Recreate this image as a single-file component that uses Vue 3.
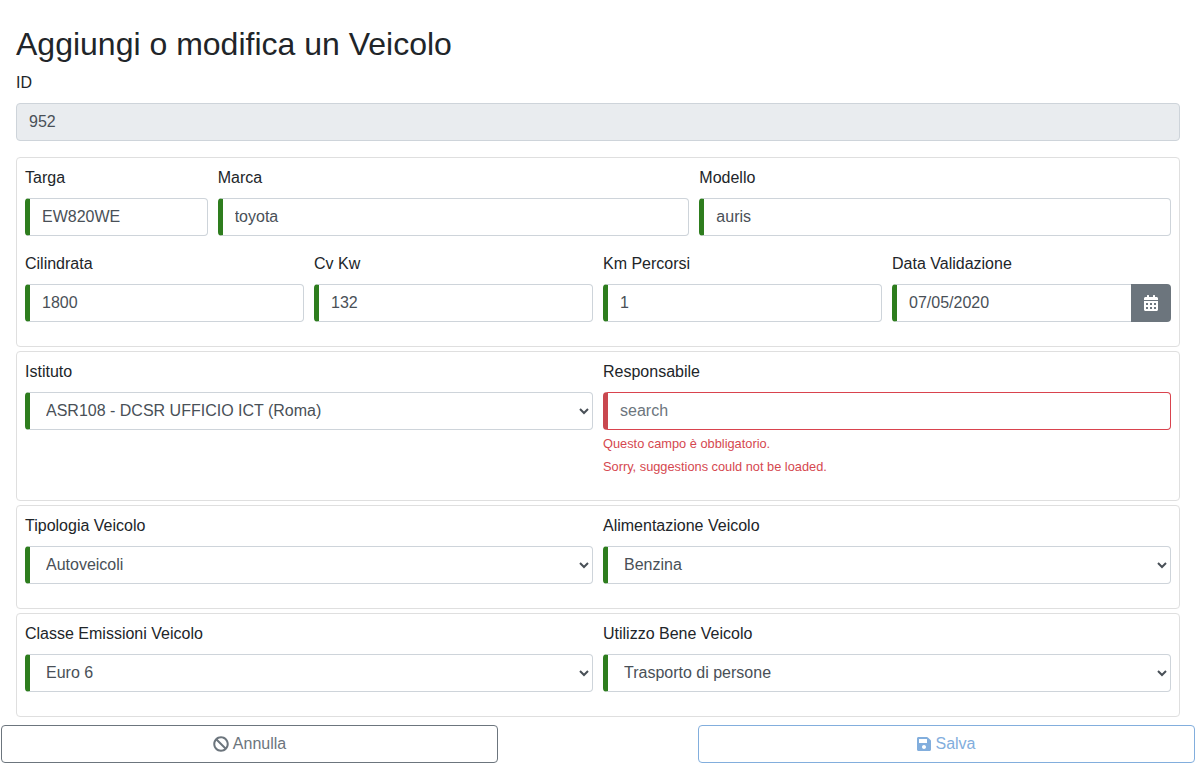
<script setup>
const row1 = [
  { label: 'Targa', value: 'EW820WE', span: 'span2' },
  { label: 'Marca', value: 'toyota', span: 'span5' },
  { label: 'Modello', value: 'auris', span: 'span5' },
]
const row2 = [
  { label: 'Cilindrata', value: '1800' },
  { label: 'Cv Kw', value: '132' },
  { label: 'Km Percorsi', value: '1' },
]
const selectCards = [
  [
    { label: 'Tipologia Veicolo', value: 'Autoveicoli' },
    { label: 'Alimentazione Veicolo', value: 'Benzina' },
  ],
  [
    { label: 'Classe Emissioni Veicolo', value: 'Euro 6' },
    { label: 'Utilizzo Bene Veicolo', value: 'Trasporto di persone' },
  ],
]
</script>

<template>
  <div class="page">
    <h2 class="title">Aggiungi o modifica un Veicolo</h2>
    <div class="group">
      <label class="label">ID</label>
      <input class="control locked" value="952" disabled />
    </div>

    <section class="card">
      <div class="grid">
        <div v-for="f in row1" :key="f.label" class="group" :class="f.span">
          <label class="label">{{ f.label }}</label>
          <input class="control ok" :value="f.value" />
        </div>
        <div v-for="f in row2" :key="f.label" class="group span3">
          <label class="label">{{ f.label }}</label>
          <input class="control ok" :value="f.value" />
        </div>
        <div class="group span3">
          <label class="label">Data Validazione</label>
          <div class="joined">
            <input class="control ok date" value="07/05/2020" />
            <button class="calendar" type="button" aria-label="Calendario">
              <svg class="cal-icon" viewBox="0 0 448 512" aria-hidden="true"><path fill="currentColor" d="M0 464c0 26.5 21.5 48 48 48h352c26.5 0 48-21.5 48-48V192H0v272zm320-196c0-6.6 5.4-12 12-12h40c6.6 0 12 5.4 12 12v40c0 6.6-5.4 12-12 12h-40c-6.6 0-12-5.4-12-12v-40zm0 128c0-6.6 5.4-12 12-12h40c6.6 0 12 5.4 12 12v40c0 6.6-5.4 12-12 12h-40c-6.6 0-12-5.4-12-12v-40zM192 268c0-6.6 5.4-12 12-12h40c6.6 0 12 5.4 12 12v40c0 6.6-5.4 12-12 12h-40c-6.6 0-12-5.4-12-12v-40zm0 128c0-6.6 5.4-12 12-12h40c6.6 0 12 5.4 12 12v40c0 6.6-5.4 12-12 12h-40c-6.6 0-12-5.4-12-12v-40zM64 268c0-6.6 5.4-12 12-12h40c6.6 0 12 5.4 12 12v40c0 6.6-5.4 12-12 12H76c-6.6 0-12-5.4-12-12v-40zm0 128c0-6.6 5.4-12 12-12h40c6.6 0 12 5.4 12 12v40c0 6.6-5.4 12-12 12H76c-6.6 0-12-5.4-12-12v-40zM400 64h-48V16c0-8.8-7.2-16-16-16h-32c-8.8 0-16 7.2-16 16v48H160V16c0-8.8-7.2-16-16-16h-32c-8.8 0-16 7.2-16 16v48H48C21.5 64 0 85.5 0 112v48h448v-48c0-26.5-21.5-48-48-48z"/></svg>
            </button>
          </div>
        </div>
      </div>
    </section>

    <section class="card">
      <div class="grid">
        <div class="group span6">
          <label class="label">Istituto</label>
          <select class="control ok"><option>ASR108 - DCSR UFFICIO ICT (Roma)</option></select>
        </div>
        <div class="group span6 with-errors">
          <label class="label">Responsabile</label>
          <input class="control bad" placeholder="search" />
          <div class="error first">Questo campo è obbligatorio.</div>
          <div class="error">Sorry, suggestions could not be loaded.</div>
        </div>
      </div>
    </section>

    <section v-for="(pair, i) in selectCards" :key="i" class="card">
      <div class="grid">
        <div v-for="f in pair" :key="f.label" class="group span6">
          <label class="label">{{ f.label }}</label>
          <select class="control ok"><option>{{ f.value }}</option></select>
        </div>
      </div>
    </section>

    <div class="actions">
      <button class="btn cancel" type="button">
        <svg class="btn-icon ban" viewBox="0 0 512 512" aria-hidden="true"><path fill="currentColor" d="M256 8C119.034 8 8 119.033 8 256s111.034 248 248 248 248-111.034 248-248S392.967 8 256 8zm130.108 117.892c65.448 65.448 70 165.481 20.677 235.637L150.47 105.216c70.204-49.356 170.226-44.735 235.638 20.676zM125.892 386.108c-65.448-65.448-70-165.481-20.677-235.637L361.53 406.784c-70.203 49.356-170.226 44.736-235.638-20.676z"/></svg>
        Annulla
      </button>
      <button class="btn save" type="button" disabled>
        <svg class="btn-icon floppy" viewBox="0 0 448 512" aria-hidden="true"><path fill="currentColor" d="M433.941 129.941l-83.882-83.882A48 48 0 0 0 316.118 32H48C21.49 32 0 53.49 0 80v352c0 26.51 21.49 48 48 48h352c26.51 0 48-21.49 48-48V163.882a48 48 0 0 0-14.059-33.941zM224 416c-35.346 0-64-28.654-64-64 0-35.346 28.654-64 64-64s64 28.654 64 64c0 35.346-28.654 64-64 64zm96-304.52V212c0 6.627-5.373 12-12 12H76c-6.627 0-12-5.373-12-12V108c0-6.627 5.373-12 12-12h228.52c3.183 0 6.235 1.264 8.485 3.515l3.48 3.48A11.996 11.996 0 0 1 320 111.48z"/></svg>
        Salva
      </button>
    </div>
  </div>
</template>

<style scoped>
.page {
  box-sizing: border-box;
  width: 1200px;
  padding: 25px 20px 0 16px;
  font-family: "Liberation Sans", Arial, sans-serif;
  font-size: 16px;
  line-height: 24px;
  color: #212529;
}
.title {
  margin: 0 0 8px;
  font-size: 32px;
  font-weight: 500;
  line-height: 38.4px;
}
.label {
  display: block;
  margin-bottom: 8px;
}
.group {
  margin-bottom: 16px;
  min-width: 0;
}
.with-errors {
  margin-bottom: 17px;
}
.control {
  display: block;
  box-sizing: border-box;
  width: 100%;
  height: 38px;
  padding: 6px 12px;
  border: 1px solid #ced4da;
  border-radius: 4px;
  background: #fff;
  color: #495057;
  font: inherit;
  outline: none;
}
select.control {
  padding-top: 5px;
  padding-bottom: 6px;
}
.control::placeholder {
  color: #6c757d;
  opacity: 1;
}
.locked {
  background: #e9ecef;
  opacity: 1;
}
.ok {
  border-left: 5px solid #2e7d1e;
}
.bad {
  border-color: #d9434e;
  border-left: 5px solid #c9484f;
}
.card {
  box-sizing: border-box;
  margin-bottom: 4px;
  padding: 8px;
  border: 1px solid #dfdfdf;
  border-radius: 4px;
}
.grid {
  display: grid;
  grid-template-columns: repeat(12, minmax(0, 1fr));
  column-gap: 10px;
}
.span2 { grid-column: span 2; }
.span3 { grid-column: span 3; }
.span5 { grid-column: span 5; }
.span6 { grid-column: span 6; }
.joined {
  display: flex;
}
.date {
  flex: 1;
  min-width: 0;
  border-right: 0;
  border-radius: 4px 0 0 4px;
}
.calendar {
  display: flex;
  align-items: center;
  justify-content: center;
  width: 40px;
  height: 38px;
  padding: 0;
  border: 0;
  border-radius: 0 4px 4px 0;
  background: #6c757d;
  color: #fff;
}
.cal-icon {
  width: 14px;
  height: 16px;
}
.error {
  margin-top: 7px;
  font-size: 12.8px;
  line-height: 16px;
  color: #d5484f;
}
.error.first {
  margin-top: 6px;
}
.actions {
  display: flex;
  justify-content: space-between;
  margin: 8px -15px 0;
}
.btn {
  display: flex;
  align-items: center;
  justify-content: center;
  gap: 4px;
  box-sizing: border-box;
  width: 497px;
  height: 38px;
  padding: 6px 12px;
  border: 1px solid;
  border-radius: 4px;
  background: #fff;
  font: inherit;
}
.cancel {
  border-color: #6c757d;
  color: #6c757d;
}
.save {
  border-color: #82aedd;
  color: #82aedd;
}
.btn-icon {
  height: 16px;
}
.ban { width: 16px; }
.floppy { width: 14px; }
</style>
